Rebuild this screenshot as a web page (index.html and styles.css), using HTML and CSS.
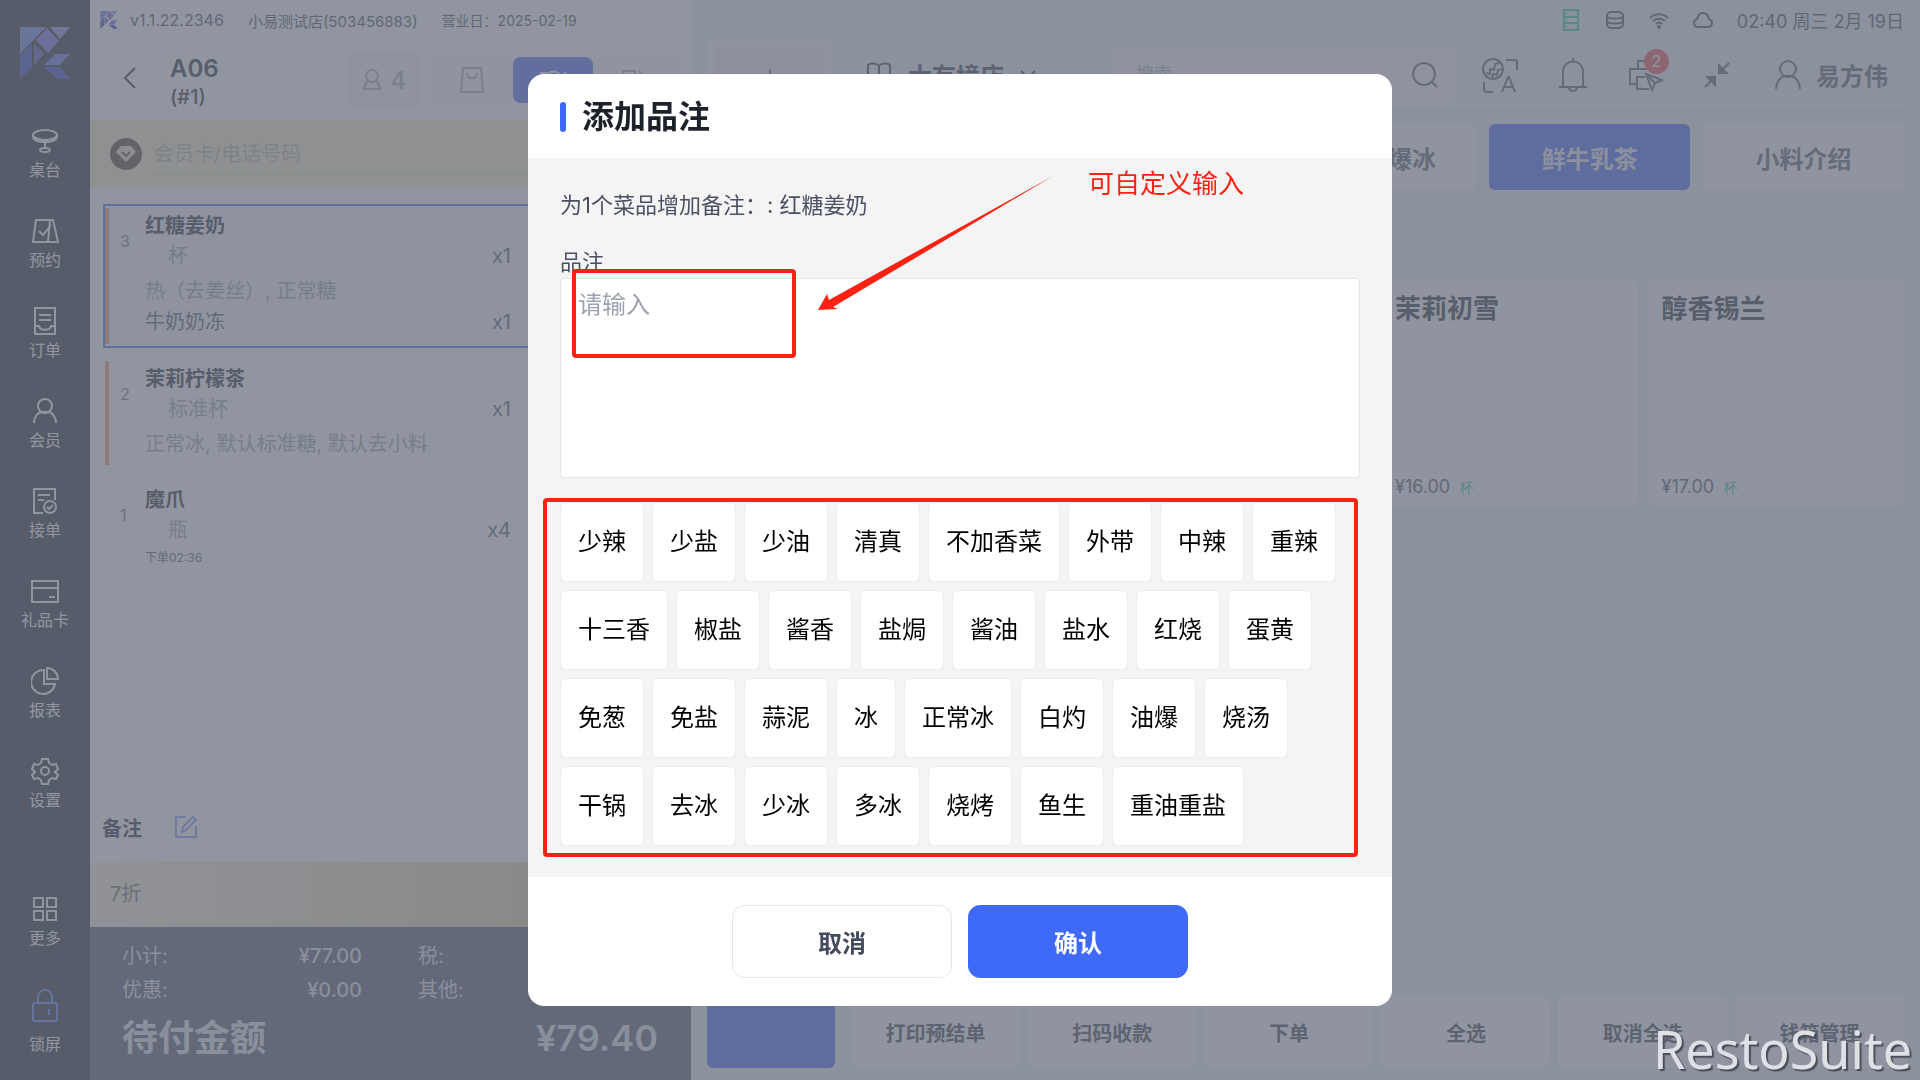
FILE: index.html
```html
<!DOCTYPE html>
<html lang="zh-CN">
<head>
  <meta charset="UTF-8">
  <meta name="viewport" content="width=device-width, initial-scale=1">
  <title>RestoSuite POS</title>
  <link rel="stylesheet" href="styles.css">
</head>
<body>
  <svg class="defs" width="0" height="0" aria-hidden="true">
    <symbol id="logo" viewBox="0 0 50 52">
      <path fill="#6680e8" d="M0 0h26L0 27z"/>
      <path fill="#7868dd" d="M27 1l12 13-11 12-12-13z"/>
      <path fill="#8c88dc" d="M30 0h20L40 12z"/>
      <path fill="#3040b8" d="M0 29l12-13v24L0 52z"/>
      <path fill="#5a4fb8" d="M14 17l10 10-10 12z"/>
      <path fill="#606ce8" d="M35 27h15L40 38H24z"/>
      <path fill="#343cc4" d="M24 40h16l10 12H38z"/>
    </symbol>
  </svg>

  <div class="app">
    <nav class="sidebar">
      <svg class="logo" width="50" height="52"><use href="#logo"/></svg>
      <a href="#" class="nav-item">
        <svg width="28" height="28" viewBox="0 0 28 28"><ellipse cx="14" cy="8" rx="12" ry="5"/><path d="M2 8v1c0 4 5 6 12 6s12-2 12-6V8M14 15v6"/><ellipse cx="14" cy="23" rx="5" ry="2"/></svg>
        <span>桌台</span>
      </a>
      <a href="#" class="nav-item">
        <svg width="28" height="28" viewBox="0 0 28 28"><path d="M5 3h14l-2 22H2zM19 3h3l5 22H17M8 14l4 4 8-10"/></svg>
        <span>预约</span>
      </a>
      <a href="#" class="nav-item">
        <svg width="28" height="28" viewBox="0 0 28 28"><path d="M4 1h20v26H4zM8 8h12M8 13h12M4 19h4c1 5 11 5 12 0h4"/></svg>
        <span>订单</span>
      </a>
      <a href="#" class="nav-item">
        <svg width="28" height="28" viewBox="0 0 28 28"><circle cx="14" cy="9" r="7"/><path d="M3 26c0-6 4-11 8-11h6c4 0 8 5 8 11"/></svg>
        <span>会员</span>
      </a>
      <a href="#" class="nav-item">
        <svg width="28" height="28" viewBox="0 0 28 28"><path d="M12 26H3V2h21v11M7 8h12M7 13h6"/><circle cx="19" cy="20" r="6"/><path d="M16 20l2 2 4-4"/></svg>
        <span>接单</span>
      </a>
      <a href="#" class="nav-item">
        <svg width="28" height="28" viewBox="0 0 28 28"><path d="M1 4h26v21H1zM1 11h26M18 20h6"/></svg>
        <span>礼品卡</span>
      </a>
      <a href="#" class="nav-item">
        <svg width="28" height="28" viewBox="0 0 28 28"><path d="M13 3a12 12 0 1 0 11 14H13zM16 1v11h11A11 11 0 0 0 16 1z"/></svg>
        <span>报表</span>
      </a>
      <a href="#" class="nav-item">
        <svg width="28" height="28" viewBox="0 0 28 28"><path d="M11 2h6l1 4 3 2 4-1 2 5-3 3 3 3-2 4-4-1-3 2-1 4h-6l-1-4-3-2-4 1-2-4 3-3-3-3 2-5 4 1 3-2z"/><circle cx="14" cy="14" r="4"/></svg>
        <span>设置</span>
      </a>
      <a href="#" class="nav-item nav-more">
        <svg width="28" height="28" viewBox="0 0 28 28"><path d="M3 3h9v9H3zM16 3h9v9h-9zM3 16h9v9H3zM16 16h9v9h-9z"/></svg>
        <span>更多</span>
      </a>
      <a href="#" class="nav-item nav-lock">
        <svg width="28" height="34" viewBox="0 0 28 34"><rect x="2" y="15" width="24" height="18" rx="2"/><path d="M7 15V9a7 7 0 0 1 14 0v6M18 21v6"/></svg>
        <span>锁屏</span>
      </a>
    </nav>

    <section class="order">
      <div class="version-bar">
        <svg width="18" height="18"><use href="#logo"/></svg>
        <span class="version">v1.1.22.2346</span>
        <span class="store">小易测试店(503456883)</span>
        <span class="biz-day">营业日：2025-02-19</span>
      </div>
      <header class="order-header">
        <button class="back" aria-label="返回">
          <svg width="14" height="24" viewBox="0 0 14 24"><path d="M12 2L2 12l10 10"/></svg>
        </button>
        <h2 class="table-name">A06 <small>(#1)</small></h2>
        <button class="guests">
          <svg width="20" height="24" viewBox="0 0 20 24"><circle cx="10" cy="8" r="6"/><path d="M6 13c-2 2-4 4-4 8h16c0-4-2-6-4-8"/></svg>
          4
        </button>
        <div class="order-types">
          <button aria-label="外带"><svg width="26" height="28" viewBox="0 0 26 28"><path d="M4 2h18l2 24H2zM8 7c1 7 9 7 10 0"/></svg></button>
          <button class="active" aria-label="堂食"><svg width="28" height="28" viewBox="0 0 28 28"><path d="M1 7h6v6H1M7 13C7 3 22 3 22 13zM26 6v20"/></svg></button>
          <button aria-label="外送"><svg width="26" height="28" viewBox="0 0 26 28"><path d="M2 5h12v12H2zM5 10h6M18 5l6 6-2 3M2 24h20"/></svg></button>
        </div>
      </header>
      <div class="member-bar">
        <svg width="32" height="32" viewBox="0 0 32 32"><circle cx="16" cy="16" r="16" fill="#4e3d20"/><path fill="#f2dfba" d="M11 8h10l5 6-10 10L6 14z"/><path d="M12 14l4 4 4-4" fill="none" stroke="#4e3d20" stroke-width="2"/></svg>
        <input type="text" aria-label="会员" placeholder="会员卡/电话号码">
      </div>
      <ul class="items">
        <li class="item pending selected">
          <span class="num">3</span>
          <div class="item-body">
            <h3>红糖姜奶</h3>
            <p class="unit">杯 <b>x1</b></p>
            <p class="spec">热（去姜丝）, 正常糖</p>
            <p class="addon">牛奶奶冻 <b>x1</b></p>
          </div>
        </li>
        <li class="item pending">
          <span class="num">2</span>
          <div class="item-body">
            <h3>茉莉柠檬茶</h3>
            <p class="unit">标准杯 <b>x1</b></p>
            <p class="spec">正常冰, 默认标准糖, 默认去小料</p>
          </div>
        </li>
        <li class="item">
          <span class="num">1</span>
          <div class="item-body">
            <h3>魔爪</h3>
            <p class="unit">瓶 <b>x4</b></p>
            <p class="time">下单02:36</p>
          </div>
        </li>
      </ul>
      <div class="remark">
        <span>备注</span>
        <button aria-label="编辑备注"><svg width="24" height="24" viewBox="0 0 24 24"><path d="M12 2H2v20h20V11M8 17l1-5L19 2l3 3-10 10z"/></svg></button>
      </div>
      <div class="discount">7折</div>
      <div class="totals">
        <dl>
          <dt>小计:</dt><dd>¥77.00</dd><dt>税:</dt><dd></dd>
          <dt>优惠:</dt><dd>¥0.00</dd><dt>其他:</dt><dd></dd>
        </dl>
        <div class="due"><span>待付金额</span><strong>¥79.40</strong></div>
      </div>
    </section>

    <main class="menu">
      <div class="status-bar">
        <svg class="online" width="20" height="22" viewBox="0 0 20 22"><path d="M3 1h14v20H3zM3 8h14M3 14h14M6 4v1M6 11v1M6 17v1"/></svg>
        <svg width="20" height="22" viewBox="0 0 20 22"><rect x="2" y="3" width="16" height="16" rx="4"/><path d="M2 8c3 2 13 2 16 0M2 13c3 2 13 2 16 0"/></svg>
        <svg width="20" height="20" viewBox="0 0 20 20"><path d="M1 8c5-5 13-5 18 0M4 11c3-3 9-3 12 0M7 14c2-2 4-2 6 0"/><circle cx="10" cy="17" r="1"/></svg>
        <svg width="20" height="20" viewBox="0 0 20 20"><path d="M5 17h10c5 0 5-7 1-8C14 1 6 1 4 9c-4 1-4 8 1 8z"/></svg>
        <time>02:40 周三 2月 19日</time>
      </div>
      <header class="menu-header">
        <div class="add-tab"><button aria-label="新增"><svg width="20" height="20" viewBox="0 0 20 20"><path d="M10 1v18M1 10h18"/></svg></button></div>
        <button class="store-picker">
          <svg width="26" height="26" viewBox="0 0 26 26"><path d="M13 4c-2-3-9-3-11-1v20c3-1 9-1 11 1 2-2 8-2 11-1V3c-2-2-9-2-11 1v20"/></svg>
          大有境店
          <svg width="16" height="10" viewBox="0 0 16 10"><path d="M1 1l7 7 7-7"/></svg>
        </button>
        <div class="search">
          <input type="text" aria-label="搜索" placeholder="搜索">
          <svg width="28" height="28" viewBox="0 0 28 28"><circle cx="13" cy="13" r="11"/><path d="M21 21l5 5"/></svg>
        </div>
        <div class="tools">
          <button aria-label="语言"><svg width="36" height="36" viewBox="0 0 36 36"><circle cx="11" cy="12" r="10"/><path d="M4 16l4 1v-5l4 1 1-6 4-1M10 21l1-4 4 1 1-5 4-1M24 3h9q2 0 2 2v8M2 25v7q0 3 3 3h6M20 35l6-15h1l6 15M22 30h9"/></svg></button>
          <button aria-label="通知"><svg width="30" height="36" viewBox="0 0 30 36"><path d="M15 1v3M5 30V15c0-14 20-14 20 0v15M1 30h28M11 31c1 4 7 4 8 0"/></svg></button>
          <button class="printer" aria-label="打印"><svg width="36" height="36" viewBox="0 0 36 36"><path d="M10 11V4h12M9 27H2V12h26v4M14 32H9V20h8M14 32h7"/><path d="M18 17l16 6-7 3-3 7zM18 17l9 9"/></svg><span class="badge">2</span></button>
          <button aria-label="收起"><svg width="26" height="28" viewBox="0 0 26 28"><path class="fill" d="M14 2v11h11zM12 15v11L1 15z"/><path d="M17 10l8-8M9 18l-8 8"/></svg></button>
        </div>
        <button class="user">
          <svg width="28" height="32" viewBox="0 0 28 32"><circle cx="14" cy="10" r="8"/><path d="M2 30c0-7 4-12 9-13h6c5 1 9 6 9 13"/></svg>
          易方伟
        </button>
      </header>
      <div class="catalog">
        <div class="categories">
          <button></button>
          <button></button>
          <button>草莓爆爆冰</button>
          <button class="active">鲜牛乳茶</button>
          <button>小料介绍</button>
        </div>
        <div class="products">
          <article></article>
          <article></article>
          <article>
            <h3>茉莉初雪</h3>
            <p>¥16.00 <span>杯</span></p>
          </article>
          <article>
            <h3>醇香锡兰</h3>
            <p>¥17.00 <span>杯</span></p>
          </article>
        </div>
      </div>
      <footer class="actions">
        <button class="primary" aria-label="结账"></button>
        <button>打印预结单</button>
        <button>扫码收款</button>
        <button>下单</button>
        <button>全选</button>
        <button>取消全选</button>
        <button>钱箱管理</button>
      </footer>
    </main>
  </div>

  <div class="overlay">
    <div class="modal" role="dialog" aria-modal="true" aria-labelledby="modalTitle">
      <header class="modal-header">
        <h1 id="modalTitle">添加品注</h1>
      </header>
      <div class="modal-body">
        <p>为1个菜品增加备注：: 红糖姜奶</p>
        <label for="note">品注</label>
        <div class="note-field">
          <textarea id="note" placeholder="请输入"></textarea>
          <div class="mark mark-input"></div>
          <svg class="arrow" width="236" height="136" viewBox="0 0 236 136"><path d="M235 0L15 131l5 2-20 1 9-16 2 6z"/></svg>
          <span class="callout">可自定义输入</span>
        </div>
        <div class="chips">
          <button>少辣</button>
          <button>少盐</button>
          <button>少油</button>
          <button>清真</button>
          <button>不加香菜</button>
          <button>外带</button>
          <button>中辣</button>
          <button>重辣</button>
          <button>十三香</button>
          <button>椒盐</button>
          <button>酱香</button>
          <button>盐焗</button>
          <button>酱油</button>
          <button>盐水</button>
          <button>红烧</button>
          <button>蛋黄</button>
          <button>免葱</button>
          <button>免盐</button>
          <button>蒜泥</button>
          <button>冰</button>
          <button>正常冰</button>
          <button>白灼</button>
          <button>油爆</button>
          <button>烧汤</button>
          <button>干锅</button>
          <button>去冰</button>
          <button>少冰</button>
          <button>多冰</button>
          <button>烧烤</button>
          <button>鱼生</button>
          <button>重油重盐</button>
          <div class="mark mark-chips"></div>
        </div>
      </div>
      <footer class="modal-footer">
        <button class="cancel">取消</button>
        <button class="confirm">确认</button>
      </footer>
    </div>
  </div>
  <div class="watermark">RestoSuite</div>
</body>
</html>
```

FILE: styles.css
```css
* {
  box-sizing: border-box;
}
body {
  margin: 0;
  font-family: Inter, "Noto Sans CJK SC", sans-serif;
  font-size: 20px;
  color: #1d2129;
}
h1, h2, h3, p, ul, dl, dd {
  margin: 0;
  padding: 0;
}
button, input, textarea {
  font: inherit;
  color: inherit;
  border: none;
  background: none;
  padding: 0;
}
button {
  cursor: pointer;
  white-space: nowrap;
}
svg {
  flex: none;
  fill: none;
  stroke: currentColor;
  stroke-width: 2;
}
.defs {
  position: absolute;
}
symbol {
  stroke: none;
}
.app {
  display: flex;
  min-height: 100vh;
  background: #eceef3;
}

/* sidebar */
.sidebar {
  display: flex;
  flex: none;
  flex-direction: column;
  align-items: center;
  width: 90px;
  padding: 27px 0 22px;
  background: #1b1e24;
}
.logo {
  margin-bottom: 42px;
}
.nav-item {
  display: flex;
  flex-direction: column;
  align-items: center;
  gap: 5px;
  height: 90px;
  padding-top: 6px;
  font-size: 16px;
  line-height: 20px;
  color: #fff;
  text-decoration: none;
}
.nav-more {
  margin-top: auto;
}
.nav-lock {
  height: 70px;
  margin-top: 9px;
  padding-top: 0;
  gap: 12px;
}
.nav-lock svg {
  color: #5b7cff;
}

/* order panel */
.order {
  display: flex;
  flex: none;
  flex-direction: column;
  width: 601px;
  background: #fff;
}
.version-bar {
  display: flex;
  align-items: center;
  height: 40px;
  padding-left: 10px;
  font-size: 16px;
  color: #444a55;
}
.version {
  margin-left: 12px;
}
.store {
  margin-left: 24px;
  font-size: 15px;
}
.biz-day {
  margin-left: 24px;
  font-size: 14px;
}
.order-header {
  display: flex;
  align-items: center;
  height: 80px;
  padding: 0 9px 0 33px;
}
.table-name {
  width: 178px;
  margin-left: 33px;
  padding-top: 5px;
  font-size: 24px;
  line-height: 28px;
  font-weight: 600;
}
.table-name small {
  display: block;
  font-size: 20px;
  font-weight: 500;
}
.guests {
  display: flex;
  align-items: center;
  justify-content: center;
  gap: 8px;
  width: 72px;
  height: 56px;
  border-radius: 8px;
  background: #f7f7f8;
  font-size: 24px;
  font-weight: 500;
  color: #a3a7ae;
}
.order-types {
  display: flex;
  flex: 1;
  align-items: center;
  margin-left: 10px;
  padding: 0 8px 0 2px;
  height: 56px;
  border-radius: 8px;
  background: #f9f9fa;
  color: #a3a7ae;
}
.order-types button {
  display: flex;
  align-items: center;
  justify-content: center;
  flex: 1;
  height: 46px;
  border-radius: 8px;
}
.order-types .active {
  background: #4a66f5;
  color: #fff;
}
.member-bar {
  display: flex;
  align-items: center;
  gap: 12px;
  height: 68px;
  padding: 0 20px;
  background: #f8ecc2;
}
.member-bar svg {
  stroke: none;
}
.member-bar input {
  flex: 1;
  height: 42px;
  border-bottom: 1px solid #d8cda6;
}
.member-bar input::placeholder {
  color: #b9b298;
}
.items {
  flex: 1;
  padding: 16px 12px 0 13px;
  list-style: none;
}
.item {
  position: relative;
  display: flex;
  padding: 5px 166px 3px 15px;
  border: 2px solid transparent;
  margin-bottom: 9px;
}
.item.selected {
  border-color: #3f6af7;
  background: #f6f7fb;
}
.pending::before {
  content: "";
  position: absolute;
  left: 0;
  top: 2px;
  bottom: 2px;
  width: 4px;
  background: #ff9065;
}
.num {
  width: 25px;
  padding-top: 18px;
  font-size: 16px;
  line-height: 24px;
  color: #6c717b;
}
.item-body {
  flex: 1;
}
.item h3 {
  font-size: 20px;
  line-height: 30px;
  font-weight: 600;
}
.item p {
  display: flex;
  justify-content: space-between;
  line-height: 30px;
}
.item b {
  font-weight: 400;
  color: #52565f;
}
.item .unit {
  padding-left: 23px;
  color: #9da1a9;
}
.item .spec {
  line-height: 40px;
  color: #9da1a9;
}
.item .addon {
  margin-bottom: 10px;
  line-height: 22px;
  color: #52565f;
}
.item .time {
  line-height: 26px;
  font-size: 12px;
  color: #52565f;
}
.remark {
  display: flex;
  align-items: center;
  gap: 32px;
  height: 70px;
  padding-left: 12px;
  font-weight: 600;
}
.remark button {
  display: flex;
  color: #7f92f8;
}
.discount {
  height: 65px;
  padding-left: 20px;
  line-height: 65px;
  color: #6d6960;
  background: linear-gradient(90deg, #fff3dc, #dcc28c);
}
.totals {
  padding: 12px 33px 11px 32px;
  background: #4b5066;
  color: #e4e6ea;
}
.totals dl {
  display: grid;
  grid-template-columns: 100px 140px 100px 1fr;
  line-height: 34px;
}
.totals dt:nth-of-type(even) {
  margin-left: 56px;
  white-space: nowrap;
}
.totals dd {
  text-align: right;
  font-weight: 500;
}
.due {
  display: flex;
  justify-content: space-between;
  font-size: 36px;
  line-height: 62px;
  font-weight: 700;
}
.due strong {
  font-weight: 600;
}

/* menu */
.menu {
  display: flex;
  flex-direction: column;
  flex: 1;
  min-width: 0;
  padding: 0 16px 12px;
}
.status-bar {
  display: flex;
  align-items: center;
  justify-content: flex-end;
  gap: 24px;
  height: 40px;
  font-size: 18px;
  color: #444a55;
}
.online {
  color: #2cc5a0;
}
.menu-header {
  display: flex;
  align-items: center;
  height: 71px;
  border-bottom: 2px solid #dcdfe5;
  color: #565a64;
}
.add-tab {
  flex: none;
  width: 126px;
  height: 71px;
  padding: 10px 8px;
  background: #f6f7f9;
}
.add-tab button {
  display: flex;
  align-items: center;
  justify-content: center;
  width: 100%;
  height: 58px;
  background: #e9ebf0;
}
.store-picker {
  display: flex;
  align-items: center;
  gap: 16px;
  margin-left: 33px;
  font-size: 24px;
  font-weight: 700;
  color: #30353e;
}
.search {
  display: flex;
  align-items: center;
  flex: 1;
  min-width: 0;
  height: 55px;
  margin-left: 76px;
  padding: 0 16px 0 24px;
  border-radius: 4px;
  background: #f6f7f9;
}
.search input {
  flex: 1;
  min-width: 0;
  font-size: 18px;
}
.search input::placeholder {
  color: #a3a7ae;
}
.tools {
  display: flex;
  align-items: center;
  gap: 40px;
  margin: 0 44px 0 27px;
}
.tools button {
  display: flex;
}
.tools .fill {
  fill: currentColor;
  stroke: none;
}
.printer {
  position: relative;
}
.badge {
  position: absolute;
  top: -8px;
  right: -5px;
  width: 25px;
  height: 25px;
  border-radius: 50%;
  background: #f2404c;
  color: #fff;
  font-size: 16px;
  line-height: 25px;
}
.user {
  display: flex;
  align-items: center;
  gap: 14px;
  margin-right: 16px;
  font-size: 24px;
  font-weight: 600;
}
.catalog {
  flex: 1;
  padding: 13px 0 0 141px;
}
.categories {
  display: grid;
  grid-template-columns: repeat(5, 1fr);
  gap: 13px;
  margin-bottom: 90px;
}
.categories button {
  height: 66px;
  border-radius: 6px;
  background: #fcfcfd;
  font-size: 24px;
  font-weight: 600;
  color: #565a64;
}
.categories .active {
  background: #3f5cf5;
  color: #e6e9f5;
}
.products {
  display: grid;
  grid-template-columns: repeat(4, 1fr);
  gap: 10px;
}
.products article {
  display: flex;
  flex-direction: column;
  justify-content: space-between;
  height: 226px;
  padding: 10px 14px 4px;
  border-radius: 8px;
  background: #fcfcfd;
}
.products h3 {
  font-size: 26px;
  line-height: 38px;
  font-weight: 600;
}
.products p {
  font-size: 18px;
  line-height: 28px;
  color: #444a55;
}
.products span {
  margin-left: 4px;
  font-size: 14px;
  color: #2cc5a0;
}
.actions {
  display: grid;
  grid-template-columns: 136px repeat(6, 1fr);
  gap: 8px;
}
.actions button {
  height: 72px;
  border-radius: 6px;
  background: #fcfcfd;
  font-weight: 600;
  color: #343942;
}
.actions .primary {
  width: 128px;
  background: #3f5cf5;
}

/* modal */
.overlay {
  position: fixed;
  inset: 0;
  display: flex;
  align-items: center;
  justify-content: center;
  background: rgba(107, 114, 128, 0.75);
}
.modal {
  width: 864px;
  border-radius: 16px;
  background: #fff;
  overflow: hidden;
}
.modal-header {
  padding: 19px 32px 17px;
}
.modal-header h1 {
  display: flex;
  align-items: center;
  gap: 16px;
  font-size: 32px;
  line-height: 48px;
  font-weight: 700;
}
.modal-header h1::before {
  content: "";
  width: 6px;
  height: 30px;
  border-radius: 3px;
  background: #3f6af7;
}
.modal-body {
  padding: 31px 32px;
  background: #f4f4f4;
  font-size: 22px;
  line-height: 32px;
  color: #4b5063;
}
.modal-body label {
  display: block;
  margin-top: 25px;
}
.note-field {
  position: relative;
}
.note-field textarea {
  display: block;
  width: 100%;
  height: 200px;
  padding: 8px 17px;
  border: 1px solid #e5e5e5;
  border-radius: 4px;
  background: #fff;
  font-size: 24px;
  line-height: 36px;
  resize: none;
}
.note-field textarea::placeholder {
  color: #9ca3af;
}
.mark {
  position: absolute;
  border: 4px solid #fb2213;
  border-radius: 4px;
  pointer-events: none;
}
.mark-input {
  left: 12px;
  top: -9px;
  width: 224px;
  height: 89px;
}
.mark-chips {
  inset: -4px 2px -11px -17px;
}
.arrow {
  position: absolute;
  left: 258px;
  top: -102px;
  fill: #fb2213;
  stroke: none;
}
.callout {
  position: absolute;
  left: 528px;
  top: -110px;
  font-size: 26px;
  color: #fb2213;
}
.chips {
  position: relative;
  display: flex;
  flex-wrap: wrap;
  gap: 8px;
  margin-top: 24px;
}
.chips button {
  height: 80px;
  padding: 0 17px;
  border: 1px solid #ebebeb;
  border-radius: 6px;
  background: #fff;
  font-size: 24px;
  color: #000;
}
.modal-footer {
  display: flex;
  justify-content: center;
  gap: 16px;
  padding: 28px 0;
}
.modal-footer button {
  width: 220px;
  height: 73px;
  border: 1px solid #e5e7eb;
  border-radius: 12px;
  font-size: 24px;
  font-weight: 700;
  color: #434a5e;
}
.modal-footer .confirm {
  border-color: #3f6af7;
  background: #3f6af7;
  color: #fff;
}
.watermark {
  position: fixed;
  right: 8px;
  bottom: 1px;
  font-family: "Noto Sans", sans-serif;
  font-size: 52px;
  line-height: 60px;
  color: #dfe1e6;
  text-shadow: 2px 2px 1px #4a4e57;
}
```
